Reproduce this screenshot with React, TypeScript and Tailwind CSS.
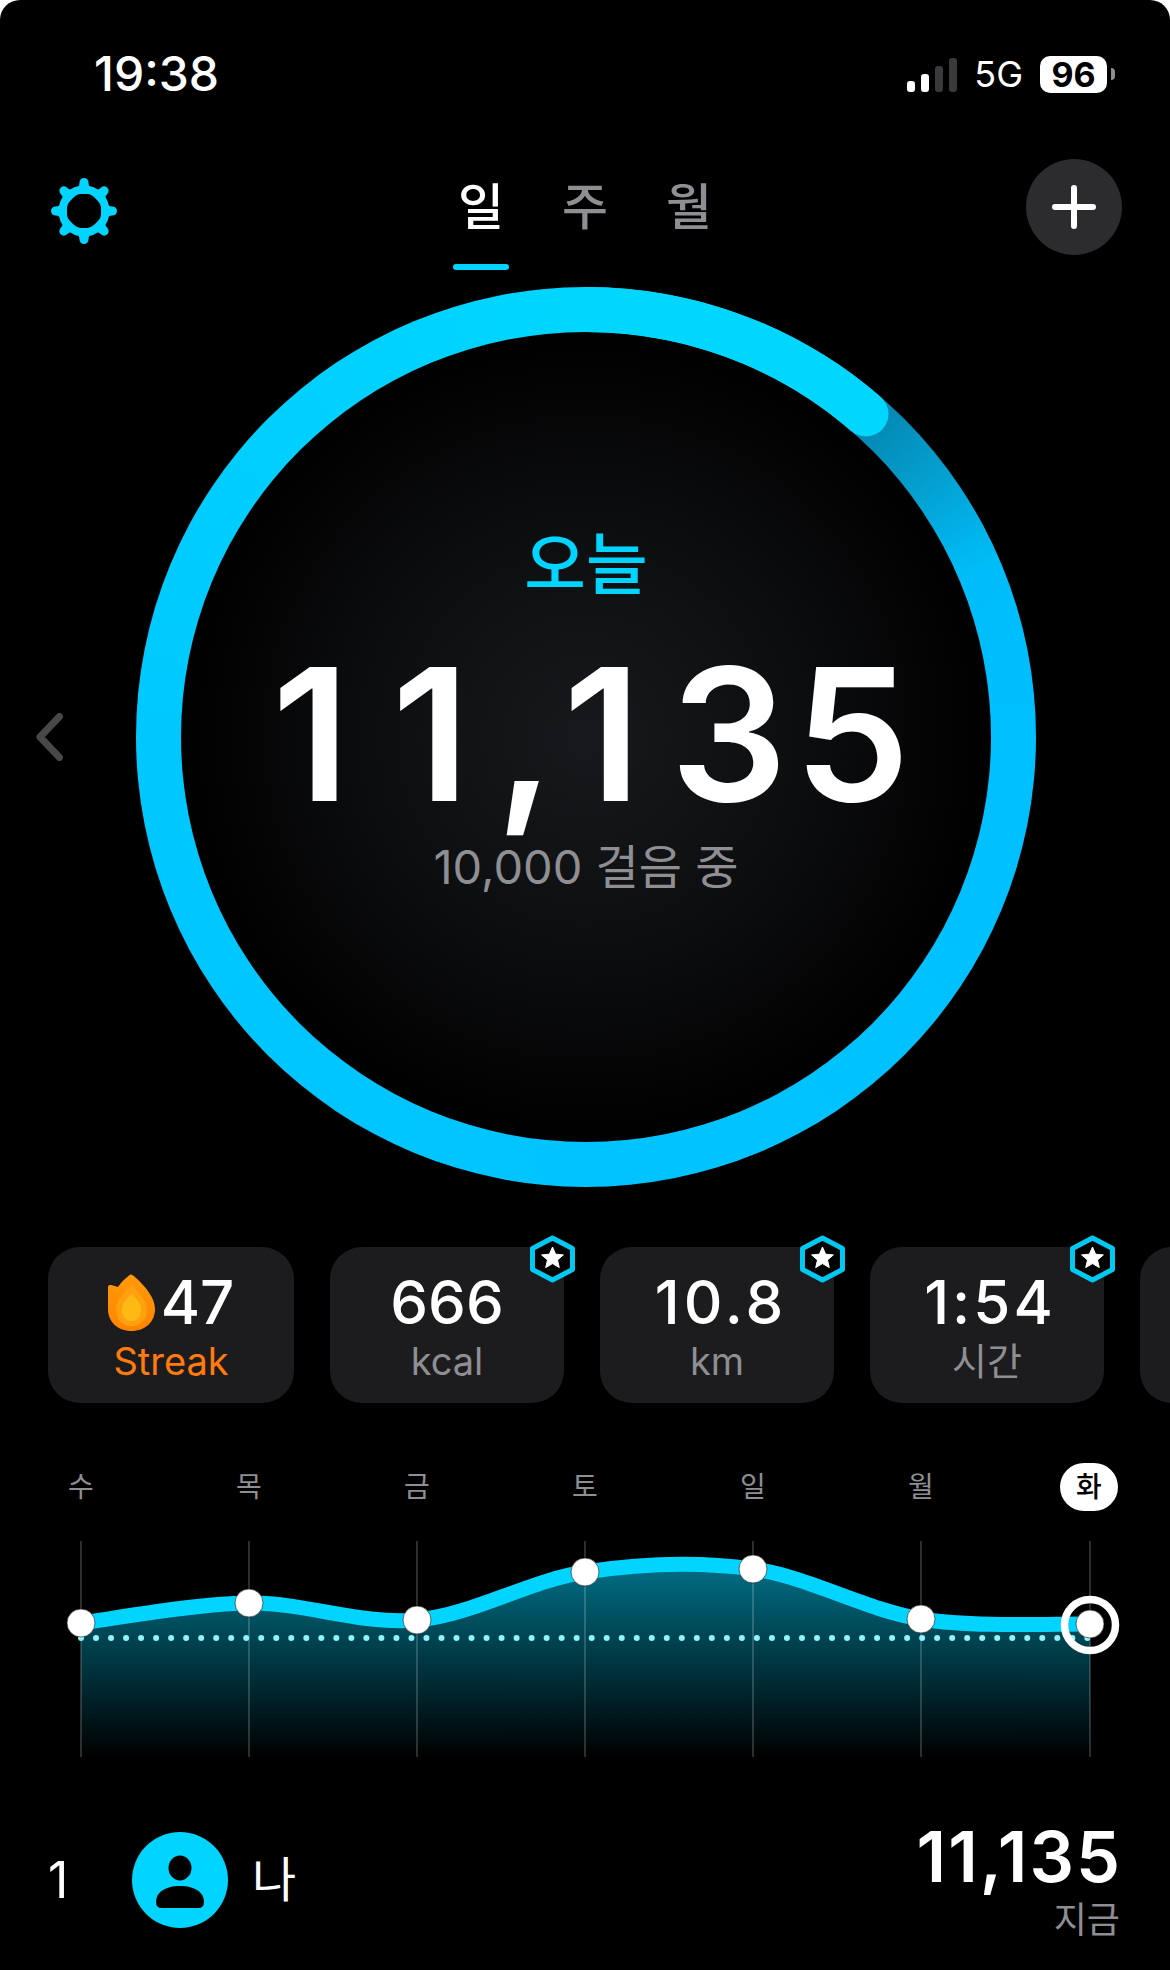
import React from "react";

const PTS: [number, number][] = [
  [81, 93], [249, 73], [417, 90], [585, 42], [753, 39], [921, 89], [1090, 94],
];

function curve(p: [number, number][]) {
  let d = `M${p[0][0]} ${p[0][1]}`;
  for (let i = 0; i < p.length - 1; i++) {
    const a = p[Math.max(i - 1, 0)], b = p[i], c = p[i + 1], e = p[Math.min(i + 2, p.length - 1)];
    const c1x = b[0] + (c[0] - a[0]) / 6, c1y = b[1] + (c[1] - a[1]) / 6;
    const c2x = c[0] - (e[0] - b[0]) / 6, c2y = c[1] - (e[1] - b[1]) / 6;
    d += ` C${c1x} ${c1y} ${c2x} ${c2y} ${c[0]} ${c[1]}`;
  }
  return d;
}
const LINE = curve(PTS);
const DOTS = Array.from({ length: 68 }, (_, i) => 81 + i * 15.02);
const DAYS = ["수", "목", "금", "토", "일", "월"];

function Gear() {
  const teeth = Array.from({ length: 8 }, (_, i) => i * 45);
  return (
    <svg viewBox="0 0 66 66" className="w-[66px] h-[66px] shrink-0">
      <circle cx="33" cy="33" r="21.5" fill="none" stroke="#00d4ff" strokeWidth="8" />
      {teeth.map((a) => (
        <g key={a} transform={`rotate(${a} 33 33)`}>
          <path d="M24 11.5 Q28.5 9.5 28.5 4.5 a4.5 4.5 0 0 1 9 0 Q37.5 9.5 42 11.5 L40 16 L26 16 Z" fill="#00d4ff" />
        </g>
      ))}
    </svg>
  );
}

function Flame() {
  return (
    <svg viewBox="0 0 47 57" className="w-[47px] h-[57px] shrink-0">
      <defs>
        <linearGradient id="fl" x1="0" y1="0" x2="0" y2="1">
          <stop offset="0" stopColor="#ff9a0a" />
          <stop offset="1" stopColor="#ff8400" />
        </linearGradient>
      </defs>
      <path d="M23 0.5 Q24.5 0.5 27 3 C38 13 47 24 47 35 C47 48 37 57 23.5 57 C10 57 0 48 0 35 L0 13 Q0 10.5 3 11 Q7 12 10 13 C13 8 18 4 21 1.5 Q22 0.5 23 0.5 Z" fill="url(#fl)" />
      <path d="M23.5 11 C32 19 39 27 39 36 C39 46 32 52 23.5 52 C15 52 8 46 8 36 C8 27 15 19 23.5 11 Z" fill="#ffa00f" />
      <path d="M23.5 20 C29 25 33 30 33 36 C33 43 29 47 23.5 47 C18 47 14 43 14 36 C14 30 18 25 23.5 20 Z" fill="#ffb915" />
    </svg>
  );
}

function Badge() {
  return (
    <svg viewBox="0 0 45 48" className="absolute right-[-11px] top-[-12px] w-[45px] h-[48px]">
      <path d="M22.5 3 L42.5 13.5 L42.5 34.5 L22.5 45 L2.5 34.5 L2.5 13.5 Z" fill="#000" stroke="#00c8f0" strokeWidth="5" strokeLinejoin="round" />
      <path d="M22.5 12 L25.6 19.2 L33.4 19.9 L27.5 25 L29.3 32.6 L22.5 28.6 L15.7 32.6 L17.5 25 L11.6 19.9 L19.4 19.2 Z" fill="#fff" stroke="#fff" strokeWidth="1" strokeLinejoin="round" />
    </svg>
  );
}

function Card({ value, label, badge = true, track = "" }: { value: string; label: string; badge?: boolean; track?: string }) {
  return (
    <div className="relative w-[234px] h-[156px] shrink-0 rounded-[32px] bg-[#1c1c1e] flex flex-col items-center pt-[20px]">
      <div className={`text-white text-[60px] leading-[70px] font-medium ${track}`}>{value}</div>
      <div className="text-[#8e8e93] text-[38px] leading-[46px] mt-[1px]">{label}</div>
      {badge && <Badge />}
    </div>
  );
}

export default function App() {
  return (
    <div className="w-[1170px] h-[1970px] bg-black rounded-t-[20px] overflow-hidden flex flex-col font-[Inter,'Noto_Sans_CJK_KR',sans-serif]">
      {/* status bar */}
      <div className="mt-[55px] h-[38px] flex items-center justify-between pl-[94px] pr-[55px] shrink-0">
        <div className="text-white text-[48px] leading-[38px] font-medium">19:38</div>
        <div className="flex items-center">
          <div className="flex items-end gap-[6px] h-[34px] mt-[2px]">
            <div className="w-[8px] h-[11px] rounded-[3px] bg-white" />
            <div className="w-[8px] h-[18px] rounded-[3px] bg-white" />
            <div className="w-[8px] h-[26px] rounded-[3px] bg-[#3a3a3c]" />
            <div className="w-[8px] h-[34px] rounded-[3px] bg-[#3a3a3c]" />
          </div>
          <div className="ml-[17px] text-white text-[36px] leading-[38px] font-normal">5G</div>
          <div className="ml-[17px] w-[67px] h-[37px] rounded-[10px] bg-white flex items-center justify-center text-black text-[34px] leading-[37px] font-bold">96</div>
          <div className="ml-[4px] w-[4px] h-[12px] rounded-r-[4px] bg-[#8e8e93]" />
        </div>
      </div>

      {/* nav */}
      <div className="mt-[66px] h-[112px] flex items-start shrink-0">
        <div className="ml-[51px] mt-[19px]"><Gear /></div>
        <div className="ml-[336px] mt-[16px] flex flex-col">
          <div className="flex gap-[58px] pl-[5px] text-[50px] leading-[64px] font-medium text-[#8e8e93]">
            <span className="text-white">일</span>
            <span>주</span>
            <span>월</span>
          </div>
          <div className="mt-[25px] w-[56px] h-[6px] rounded-full bg-[#00d4ff]" />
        </div>
        <div className="ml-auto mr-[48px] w-[96px] h-[96px] rounded-full bg-[#2c2c2e] flex items-center justify-center">
          <svg viewBox="0 0 44 44" className="w-[44px] h-[44px]">
            <path d="M22 3 V41 M3 22 H41" stroke="#fff" strokeWidth="6" strokeLinecap="round" />
          </svg>
        </div>
      </div>

      {/* ring */}
      <div className="mt-[16px] h-[900px] flex items-center pl-[36px] shrink-0">
        <svg viewBox="0 0 27 48" className="w-[27px] h-[48px] shrink-0">
          <path d="M23.5 3.5 L4 24 L23.5 44.5" fill="none" stroke="#48484a" strokeWidth="7" strokeLinecap="round" strokeLinejoin="round" />
        </svg>
        <div className="relative ml-[73px] w-[900px] h-[900px] shrink-0 rounded-full bg-[conic-gradient(from_41deg,#0586b0_0deg,#049fcf_12deg,#00bdf9_26deg,#00bfff_45deg,#00c4ff_139deg,#00c8ff_229deg,#00d6ff_319deg,#00d6ff_360deg)]">
          <div className="absolute inset-[45px] rounded-full bg-[radial-gradient(circle_closest-side,#18191c_0%,#0c0d0f_55%,#000_100%)]" />
          <svg viewBox="0 0 900 900" className="absolute inset-0 w-[900px] h-[900px]">
            <path d="M450 22.5 A427.5 427.5 0 0 1 730 127" fill="none" stroke="#00d6ff" strokeWidth="45" strokeLinecap="round" />
          </svg>
          <div className="absolute inset-0 flex flex-col items-center pt-[238px]">
            <div className="text-[#00d4ff] text-[67px] leading-[80px] font-medium">오늘</div>
            <div className="mt-[29px] pl-[10px] flex text-white text-[184px] leading-[200px] font-semibold">
              <span className="mr-[42px]">1</span>
              <span className="mr-[26px]">1</span>
              <span className="mr-[9px]">,</span>
              <span className="mr-[29px]">1</span>
              <span className="mr-[7px]">3</span>
              <span>5</span>
            </div>
            <div className="mt-[3px] text-[#8e8e93] text-[47px] leading-[60px]">10,000 걸음 중</div>
          </div>
        </div>
      </div>

      {/* stat cards */}
      <div className="mt-[48px] pt-[12px] h-[168px] flex gap-[36px] pl-[48px] shrink-0">
        <div className="relative w-[246px] h-[156px] shrink-0 rounded-[32px] bg-[#1c1c1e] flex flex-col items-center pt-[20px]">
          <div className="flex items-center gap-[6px] h-[70px]">
            <Flame />
            <div className="text-white text-[60px] leading-[70px] font-medium">47</div>
          </div>
          <div className="text-[#ff7a0f] text-[38px] leading-[46px] mt-[1px]">Streak</div>
        </div>
        <Card value="666" label="kcal" />
        <Card value="10.8" label="km" track="tracking-[4px] pl-[8px]" />
        <Card value="1:54" label="시간" track="tracking-[3px] pl-[6px]" />
        <Card value="" label="" badge={false} />
      </div>

      {/* day labels */}
      <div className="mt-[60px] h-[48px] ml-[-3px] flex items-center shrink-0">
        {DAYS.map((d) => (
          <div key={d} className="w-[168px] shrink-0 text-center text-[#8e8e93] text-[28px] leading-[48px]">{d}</div>
        ))}
        <div className="w-[168px] shrink-0 flex justify-center">
          <div className="w-[58px] h-[48px] rounded-full bg-white text-black text-center text-[28px] leading-[48px] font-medium">화</div>
        </div>
      </div>

      {/* chart */}
      <svg viewBox="0 0 1170 230" className="mt-[19px] w-[1170px] h-[230px] shrink-0">
        <defs>
          <linearGradient id="area" x1="0" y1="35" x2="0" y2="227" gradientUnits="userSpaceOnUse">
            <stop offset="0" stopColor="#00d4ff" stopOpacity="0.52" />
            <stop offset="1" stopColor="#00d4ff" stopOpacity="0" />
          </linearGradient>
        </defs>
        <path d={`${LINE} L1090 227 L81 227 Z`} fill="url(#area)" />
        {PTS.map(([x]) => (
          <line key={x} x1={x} x2={x} y1="11" y2="227" stroke="#fff" strokeOpacity="0.25" strokeWidth="1.4" />
        ))}
        <path d={LINE} fill="none" stroke="#00d4ff" strokeWidth="15" />
        {DOTS.map((x) => (
          <circle key={x} cx={x} cy="108" r="3" fill="#8ef4ff" />
        ))}
        {PTS.map(([x, y]) => (
          <circle key={x} cx={x} cy={y} r="14" fill="#fff" stroke="#111" strokeOpacity="0.6" strokeWidth="1" />
        ))}
        <circle cx="1090" cy="95" r="25.5" fill="none" stroke="#fff" strokeWidth="7.5" />
      </svg>

      {/* bottom row */}
      <div className="mt-[60px] h-[120px] flex items-center pl-[48px] pr-[48px] shrink-0">
        <div className="w-[84px] text-white text-[50px] leading-[60px]">1</div>
        <div className="w-[96px] h-[96px] rounded-full bg-[#00d4ff] flex items-center justify-center">
          <svg viewBox="0 0 96 96" className="w-[96px] h-[96px]">
            <ellipse cx="48" cy="36" rx="11.5" ry="12.5" fill="#000" />
            <path d="M24 70 C24 60 34 54 48 54 C62 54 72 60 72 70 Q72 76 66 76 L30 76 Q24 76 24 70 Z" fill="#000" />
          </svg>
        </div>
        <div className="ml-[24px] text-white text-[48px] leading-[60px]">나</div>
        <div className="ml-auto flex flex-col items-end">
          <div className="text-white text-[70px] leading-[76px] font-semibold tracking-[2px]">11,135</div>
          <div className="text-[#8e8e93] text-[36px] leading-[44px] mt-[3px] mr-[2px]">지금</div>
        </div>
      </div>
    </div>
  );
}
